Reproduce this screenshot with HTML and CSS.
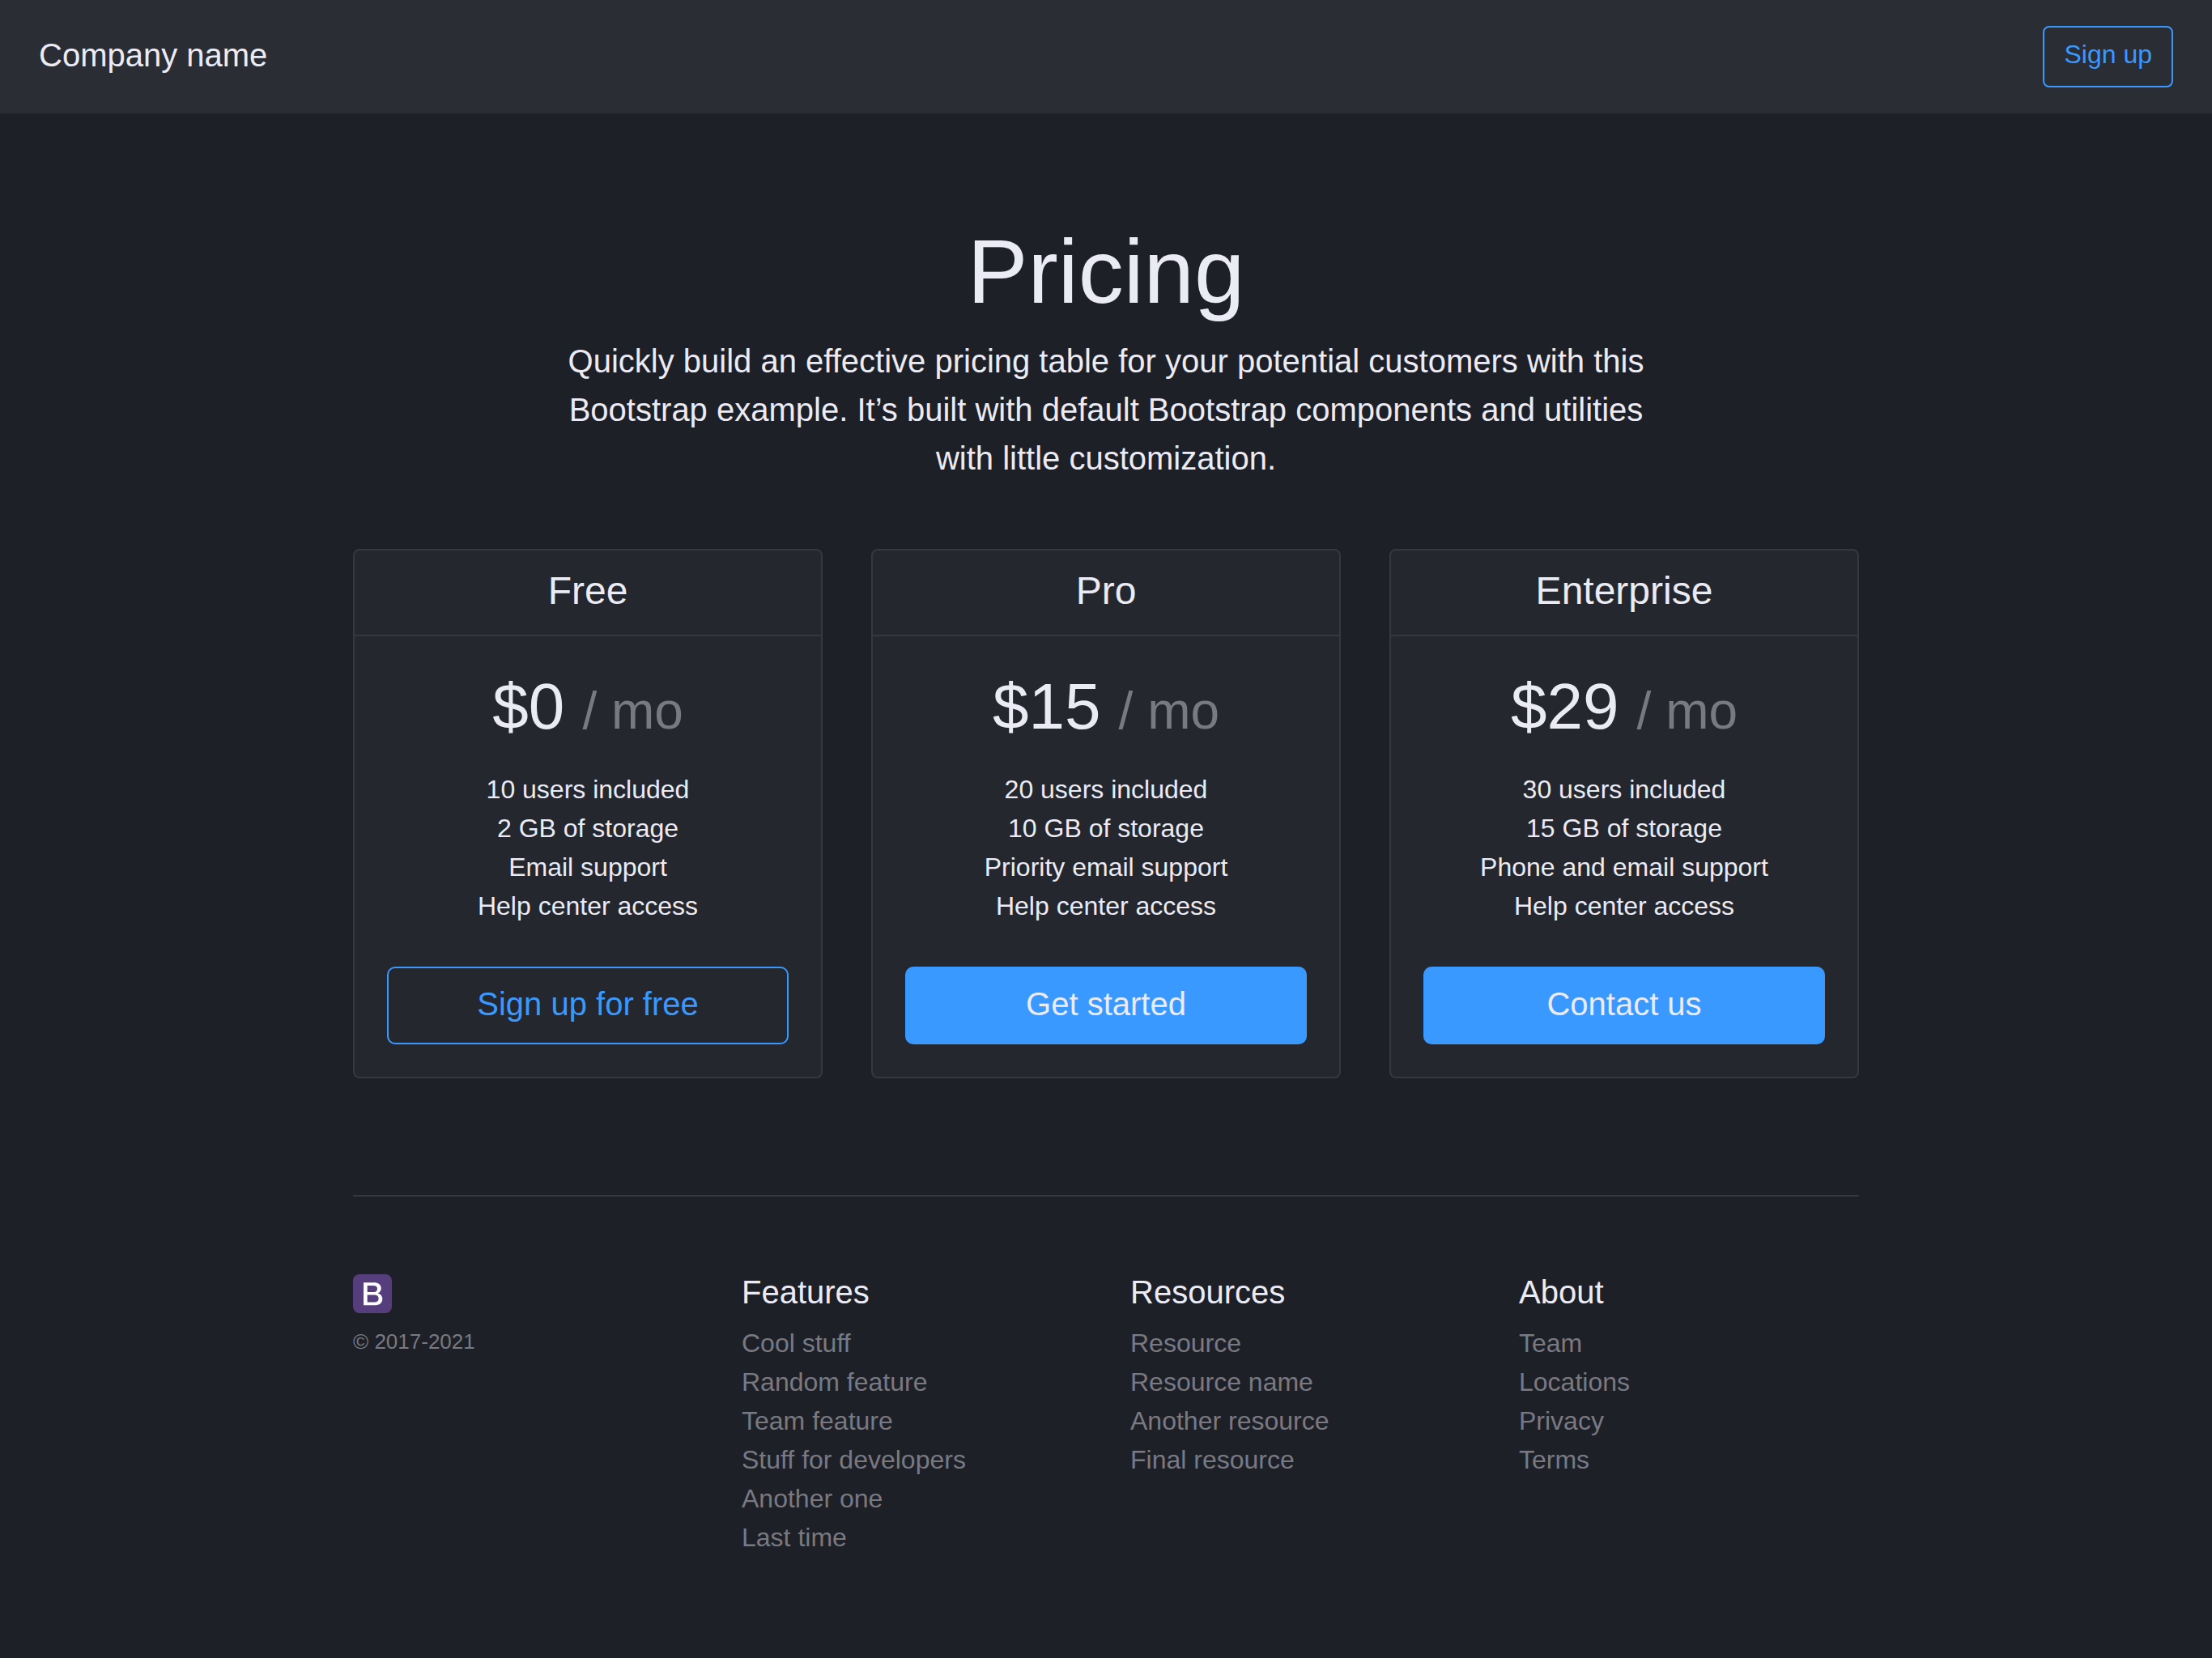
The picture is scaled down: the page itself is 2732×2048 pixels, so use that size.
FILE: index.html
```html
<!DOCTYPE html>
<html lang="en">
<head>
<meta charset="utf-8">
<meta name="viewport" content="width=device-width, initial-scale=1">
<title>Pricing</title>
<link rel="stylesheet" href="styles.css">
</head>
<body>
<header class="navbar">
  <p class="brand">Company name</p>
  <button type="button" class="btn btn-outline">Sign up</button>
</header>

<section class="intro">
  <h1 class="intro-title">Pricing</h1>
  <p class="lead">Quickly build an effective pricing table for your potential customers with this Bootstrap example. It’s built with default Bootstrap components and utilities with little customization.</p>
</section>

<div class="container">
  <main class="plans">
    <article class="card">
      <h2 class="card-header">Free</h2>
      <div class="card-body">
        <p class="price">$0 <small class="per">/ mo</small></p>
        <ul class="list perks">
          <li>10 users included</li>
          <li>2 GB of storage</li>
          <li>Email support</li>
          <li>Help center access</li>
        </ul>
        <button type="button" class="btn btn-lg btn-outline">Sign up for free</button>
      </div>
    </article>
    <article class="card">
      <h2 class="card-header">Pro</h2>
      <div class="card-body">
        <p class="price">$15 <small class="per">/ mo</small></p>
        <ul class="list perks">
          <li>20 users included</li>
          <li>10 GB of storage</li>
          <li>Priority email support</li>
          <li>Help center access</li>
        </ul>
        <button type="button" class="btn btn-lg btn-primary">Get started</button>
      </div>
    </article>
    <article class="card">
      <h2 class="card-header">Enterprise</h2>
      <div class="card-body">
        <p class="price">$29 <small class="per">/ mo</small></p>
        <ul class="list perks">
          <li>30 users included</li>
          <li>15 GB of storage</li>
          <li>Phone and email support</li>
          <li>Help center access</li>
        </ul>
        <button type="button" class="btn btn-lg btn-primary">Contact us</button>
      </div>
    </article>
  </main>

  <footer class="footer">
    <div>
      <svg class="logo" viewBox="0 0 48 48" role="img" aria-label="Bootstrap">
        <rect width="48" height="48" rx="8" fill="#563d7c"/>
        <path fill="#fff" fill-rule="evenodd" d="M13 10.300H25.700C31.500 10.300 34.700 13 34.700 17.300C34.700 20.200 33.200 22.400 30.500 23.500C34.200 24.300 36.300 26.900 36.300 30.400C36.300 35.400 32.600 38.300 26.500 38.300H13ZM17.700 13.900V22.100H24.900C28.300 22.100 30 20.600 30 17.900S28.400 13.900 25.200 13.900ZM17.700 25.600V34.600H25.900C29.600 34.600 31.600 33 31.600 30S29.500 25.600 25.600 25.600Z"/>
      </svg>
      <small class="copyright">© 2017-2021</small>
    </div>
    <nav aria-labelledby="f-features">
      <h3 class="footer-title" id="f-features">Features</h3>
      <ul class="list">
        <li><a class="link" href="#">Cool stuff</a></li>
        <li><a class="link" href="#">Random feature</a></li>
        <li><a class="link" href="#">Team feature</a></li>
        <li><a class="link" href="#">Stuff for developers</a></li>
        <li><a class="link" href="#">Another one</a></li>
        <li><a class="link" href="#">Last time</a></li>
      </ul>
    </nav>
    <nav aria-labelledby="f-resources">
      <h3 class="footer-title" id="f-resources">Resources</h3>
      <ul class="list">
        <li><a class="link" href="#">Resource</a></li>
        <li><a class="link" href="#">Resource name</a></li>
        <li><a class="link" href="#">Another resource</a></li>
        <li><a class="link" href="#">Final resource</a></li>
      </ul>
    </nav>
    <nav aria-labelledby="f-about">
      <h3 class="footer-title" id="f-about">About</h3>
      <ul class="list">
        <li><a class="link" href="#">Team</a></li>
        <li><a class="link" href="#">Locations</a></li>
        <li><a class="link" href="#">Privacy</a></li>
        <li><a class="link" href="#">Terms</a></li>
      </ul>
    </nav>
  </footer>
</div>
</body>
</html>
```
FILE: styles.css
```css
*,
*::before,
*::after {
  box-sizing: border-box;
}

:root {
  --bg: #1e2028;
  --bar: #2b2d35;
  --card: #24272e;
  --line: #35383f;
  --text: #ebebf5;
  --muted: #797982;
  --blue: #3a99ff;
}

body {
  margin: 0;
  background: var(--bg);
  color: var(--text);
  font-family: "Liberation Sans", Arial, sans-serif;
  font-size: 32px;
  line-height: 48px;
}

h1, h2, h3, p {
  margin: 0;
  font-weight: 400;
}

.navbar {
  display: flex;
  align-items: center;
  justify-content: space-between;
  padding: 32px 48px;
  background: var(--bar);
}

.brand {
  padding-bottom: 4px;
  font-size: 40px;
  line-height: 60px;
}

.btn {
  padding: 9px 24px 15px;
  border: 2px solid var(--blue);
  border-radius: 8px;
  background: transparent;
  color: var(--blue);
  font: inherit;
  text-align: center;
  cursor: pointer;
}

.btn-lg {
  width: 100%;
  padding: 14px 32px 18px;
  border-radius: 10px;
  font-size: 40px;
  line-height: 60px;
}

.btn-primary {
  background: var(--blue);
  color: var(--text);
}

.intro {
  max-width: 1400px;
  margin: 32px auto;
  padding: 96px 32px 50px;
  text-align: center;
}

.intro-title {
  margin-bottom: 12px;
  font-size: 112px;
  line-height: 136px;
}

.lead {
  font-size: 40px;
  line-height: 60px;
}

.container {
  max-width: 1920px;
  margin: 0 auto;
  padding: 0 30px;
}

.plans {
  display: grid;
  grid-template-columns: repeat(3, 1fr);
  gap: 60px;
  margin-bottom: 144px;
  text-align: center;
}

.card {
  border: 2px solid var(--line);
  border-radius: 8px;
  background: var(--card);
}

.card-header {
  padding: 22px 40px 26px;
  border-bottom: 2px solid var(--line);
  font-size: 48px;
  line-height: 56px;
}

.card-body {
  padding: 40px;
}

.price {
  font-size: 80px;
  line-height: 93px;
}

.per {
  color: var(--muted);
  font-size: 64px;
  line-height: 64px;
}

.list {
  margin: 0;
  padding: 0;
  list-style: none;
}

.perks {
  margin: 32px 0 51px;
}

.footer {
  display: grid;
  grid-template-columns: repeat(4, 1fr);
  column-gap: 60px;
  margin-bottom: 96px;
  padding-top: 94px;
  border-top: 2px solid var(--line);
}

.logo {
  display: block;
  width: 48px;
  height: 48px;
  margin: 2px 0 16px;
}

.copyright {
  display: block;
  color: var(--muted);
  font-size: 26px;
  line-height: 38px;
}

.footer-title {
  margin-bottom: 15px;
  font-size: 40px;
  line-height: 48px;
}

.link {
  color: var(--muted);
  text-decoration: none;
}
```
